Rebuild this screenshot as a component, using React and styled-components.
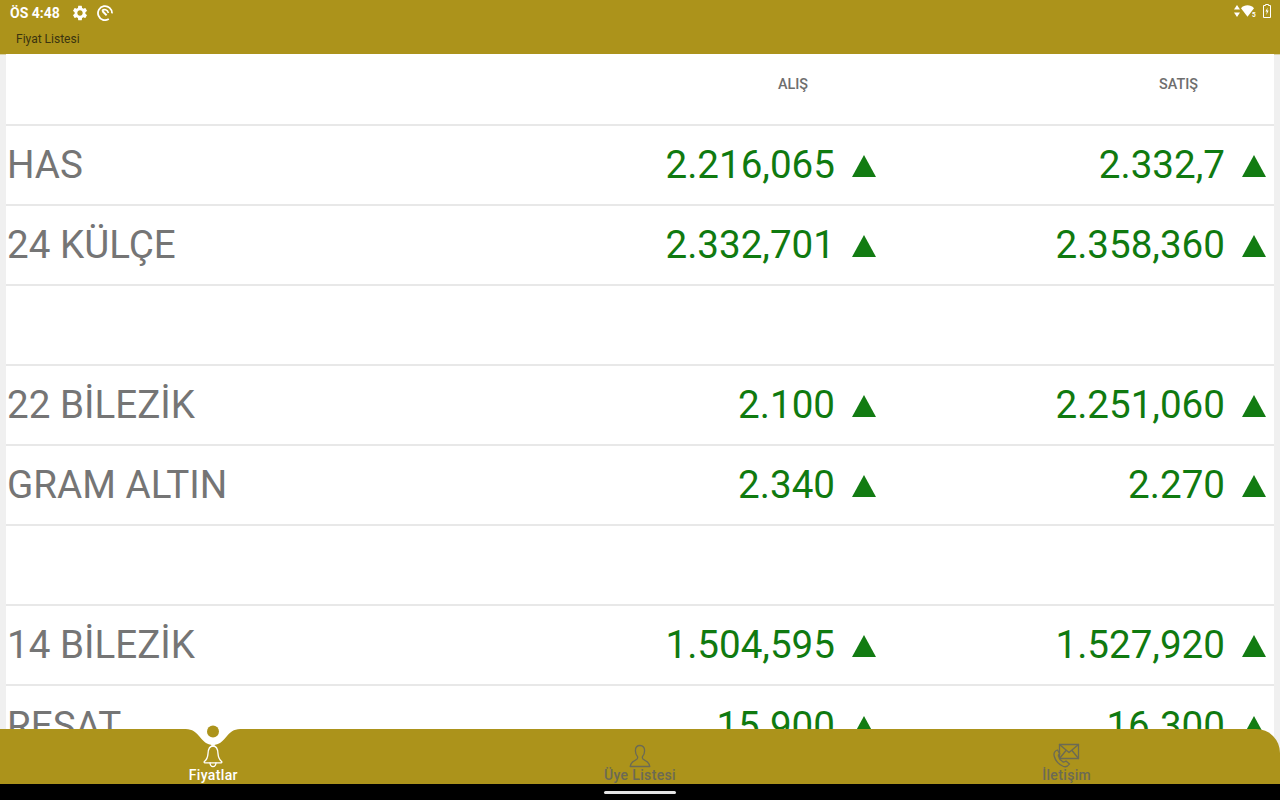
import React from 'react';
import styled, { createGlobalStyle } from 'styled-components';
import { MdSettings } from 'react-icons/md';

const GlobalStyle = createGlobalStyle`
   html, body {
      margin: 0;
      padding: 0;
      background: #f0f0f0;
   }

   * {
      box-sizing: border-box;
   }
`;

const Page = styled.div`
   display: flex;
   flex-direction: column;
   width: 1280px;
   height: 800px;
   overflow: hidden;
   font-family: Roboto, 'Liberation Sans', sans-serif;
   background: #f0f0f0;
`;

const Header = styled.header`
   display: flex;
   flex-direction: column;
   flex: none;
   height: 54px;
   background: #ac931b;
   box-shadow: 0 1px 0 #d8d2a8;
`;

const StatusBar = styled.div`
   display: flex;
   align-items: center;
   height: 25px;
   padding: 0 9px 0 10px;
   color: #fff;
`;

const Clock = styled.span`
   font-size: 14px;
   font-weight: 700;
   margin-right: 11px;
`;

const GearIcon = styled(MdSettings)`
   margin-right: 8px;
   color: #fff;
`;

const StatusIcons = styled.div`
   display: flex;
   align-items: center;
   gap: 1px;
   margin-left: auto;
   margin-bottom: 3px;
`;

const Title = styled.div`
   padding: 7px 0 0 16px;
   font-size: 12px;
   line-height: 14px;
   color: #3a3410;
`;

const List = styled.main`
   flex: none;
   height: 699px;
   margin: 0 6px;
   background: #fff;
   overflow: hidden;
`;

const Columns = styled.div`
   display: grid;
   grid-template-columns: 1fr 390px 390px;
   align-items: center;
`;

const HeadRow = styled(Columns)`
   height: 72px;
   border-bottom: 2px solid #e8e8e8;
`;

const HeadCell = styled.div`
   padding: 0 76px 10px 0;
   text-align: right;
   font-size: 14.4px;
   font-weight: 500;
   color: #6e6e6e;
`;

const Row = styled(Columns)`
   height: 80px;
   border-bottom: ${(p) => (p.$last ? 'none' : '2px solid #e8e8e8')};
`;

const Name = styled.div`
   padding: 0 0 2px 1px;
   font-size: 38.6px;
   color: #757575;
   white-space: nowrap;
`;

const Price = styled.div`
   display: flex;
   align-items: center;
   justify-content: flex-end;
   gap: 17px;
   padding-right: 8px;
   font-size: 38.6px;
   color: #107a10;
`;

const Amount = styled.span`
   padding-bottom: 2px;
`;

const UpArrow = styled.span`
   flex: none;
   width: 0;
   height: 0;
   margin-top: 2px;
   border-left: 12px solid transparent;
   border-right: 12px solid transparent;
   border-bottom: 22px solid #137c13;
`;

const TabBar = styled.nav`
   position: relative;
   z-index: 1;
   display: grid;
   grid-template-columns: repeat(3, 1fr);
   flex: none;
   height: 55px;
   margin-top: -24px;
   background: #ac931b;
   border-top-right-radius: 24px;
`;

const Notch = styled.svg`
   position: absolute;
   left: 183px;
   top: -1px;
   overflow: visible;
`;

const Tab = styled.div`
   position: relative;
   display: flex;
   flex-direction: column;
   align-items: center;
   justify-content: flex-end;
   padding-bottom: 1px;
   font-size: 14px;
   font-weight: 500;
   letter-spacing: 0.35px;
   line-height: 15px;
   color: ${(p) => (p.$active ? '#fff' : '#6b6a55')};
`;

const TabIcon = styled.svg`
   display: block;
   fill: none;
   stroke: currentColor;
   stroke-width: 1.3;
   stroke-linejoin: round;
   stroke-linecap: round;
`;

const SystemBar = styled.div`
   display: flex;
   align-items: center;
   justify-content: center;
   flex: none;
   height: 16px;
   background: #000;
`;

const HomePill = styled.span`
   width: 72px;
   height: 3px;
   margin-top: 1px;
   border-radius: 2px;
   background: #e4e4e4;
`;

const rows = [
   { name: 'HAS', buy: '2.216,065', sell: '2.332,7' },
   { name: '24 KÜLÇE', buy: '2.332,701', sell: '2.358,360' },
   {},
   { name: '22 BİLEZİK', buy: '2.100', sell: '2.251,060' },
   { name: 'GRAM ALTIN', buy: '2.340', sell: '2.270' },
   {},
   { name: '14 BİLEZİK', buy: '1.504,595', sell: '1.527,920' },
   { name: 'REŞAT', buy: '15.900', sell: '16.300' },
];

const DataSaverIcon = () => (
   <svg width="16" height="16" viewBox="0 0 16 16" fill="none" stroke="#fff">
      <path d="M11.8 14A7 7 0 1 1 15 8.4" strokeWidth="1.8" />
      <path d="M5 5.8C7 3.6 10.6 4.6 11.4 8" strokeWidth="1.6" />
      <path d="M5.4 6 9.6 10.4" strokeWidth="2" />
   </svg>
);

const TransferIcon = () => (
   <svg width="6" height="12" viewBox="0 0 6 12" fill="#fff">
      <path d="M3 0 6 4.5H0Z" />
      <path d="M3 12 6 7.5H0Z" />
   </svg>
);

const WifiIcon = () => (
   <svg width="16" height="12" viewBox="0 0 16 12">
      <path d="M0 3.2C3.4 -.6 9.6 -.6 13 3.2L6.5 11.8Z" fill="#fff" />
      <text x="11" y="11.5" fontSize="6.5" fontWeight="700" fill="#fff" fontFamily="Roboto, sans-serif">
         5
      </text>
   </svg>
);

const BatteryIcon = () => (
   <svg width="8" height="14" viewBox="0 0 8 14" fill="none" style={{ marginLeft: 5 }}>
      <path d="M2.5 .5H5.5V1.5H7.5V13.5H.5V1.5H2.5Z" stroke="#fff" />
      <path d="M4.6 3.5 2.4 7.5H3.8L3.4 11 5.6 6.6H4.2Z" fill="#fff" />
   </svg>
);

const BellIcon = () => (
   <TabIcon width="20" height="25" viewBox="0 0 20 25">
      <circle cx="10" cy="1.8" r="1.2" />
      <path d="M10 3C5.8 3 5.2 6.6 5 10.6 4.8 14.4 3.6 16.6 1.4 18.4 .8 19 1.1 19.8 1.9 19.8H18.1C18.9 19.8 19.2 19 18.6 18.4 16.4 16.6 15.2 14.4 15 10.6 14.8 6.6 14.2 3 10 3Z" />
      <path d="M7 19.8C7.2 22.4 8.4 23.6 10 23.6S12.8 22.4 13 19.8" />
   </TabIcon>
);

const UserIcon = () => (
   <TabIcon width="22" height="24" viewBox="0 0 22 24">
      <path d="M11 1.5C7.8 1.5 6.4 3.8 6.4 6.8 6.4 9.6 7.4 11.6 8.6 12.8 9 14.4 8.2 15.4 6.4 16.2 4.2 17.2 1.8 18.2 1.2 22.5H20.8C20.2 18.2 17.8 17.2 15.6 16.2 13.8 15.4 13 14.4 13.4 12.8 14.6 11.6 15.6 9.6 15.6 6.8 15.6 3.8 14.2 1.5 11 1.5Z" />
   </TabIcon>
);

const ContactIcon = () => (
   <TabIcon width="27" height="25" viewBox="0 0 27 25">
      <path d="M6.5 1.5H25.5V15.5H6.5Z" />
      <path d="M6.5 1.5 16 9.5 25.5 1.5M6.5 15.5 13 7.5M25.5 15.5 19 7.5" />
      <path d="M4.5 7C1.5 8 .5 10 1.2 13 2.2 17.5 6 22 10.5 23.5 13 24.3 15 23.2 16.5 21L13 18C12 18.8 11 19.4 9.8 18.8 7.6 17.6 6 15 5.4 12.8 5.2 12 5.8 11.2 6.8 10.8Z" />
   </TabIcon>
);

const App = () => {
   return (
      <Page>
         <GlobalStyle />
         <Header>
            <StatusBar>
               <Clock>ÖS 4:48</Clock>
               <GearIcon size={18} />
               <DataSaverIcon />
               <StatusIcons>
                  <TransferIcon />
                  <WifiIcon />
                  <BatteryIcon />
               </StatusIcons>
            </StatusBar>
            <Title>Fiyat Listesi</Title>
         </Header>
         <List>
            <HeadRow>
               <div />
               <HeadCell>ALIŞ</HeadCell>
               <HeadCell>SATIŞ</HeadCell>
            </HeadRow>
            {rows.map((row, idx) =>
               row.name ? (
                  <Row key={idx} $last={idx === rows.length - 1}>
                     <Name>{row.name}</Name>
                     <Price>
                        <Amount>{row.buy}</Amount>
                        <UpArrow />
                     </Price>
                     <Price>
                        <Amount>{row.sell}</Amount>
                        <UpArrow />
                     </Price>
                  </Row>
               ) : (
                  <Row key={idx} />
               )
            )}
         </List>
         <TabBar>
            <Notch width="60" height="20" viewBox="0 0 60 20">
               <path d="M0 0H60V1C52 1 49 2 44 8 40 13 36 17 30 17 24 17 20 13 16 8 11 2 8 1 0 1Z" fill="#fff" />
               <circle cx="30" cy="3.5" r="6" fill="#ac931b" />
            </Notch>
            <Tab $active>
               <BellIcon />
               Fiyatlar
            </Tab>
            <Tab>
               <UserIcon />
               Üye Listesi
            </Tab>
            <Tab>
               <ContactIcon />
               İletişim
            </Tab>
         </TabBar>
         <SystemBar>
            <HomePill />
         </SystemBar>
      </Page>
   );
};

export default App;
